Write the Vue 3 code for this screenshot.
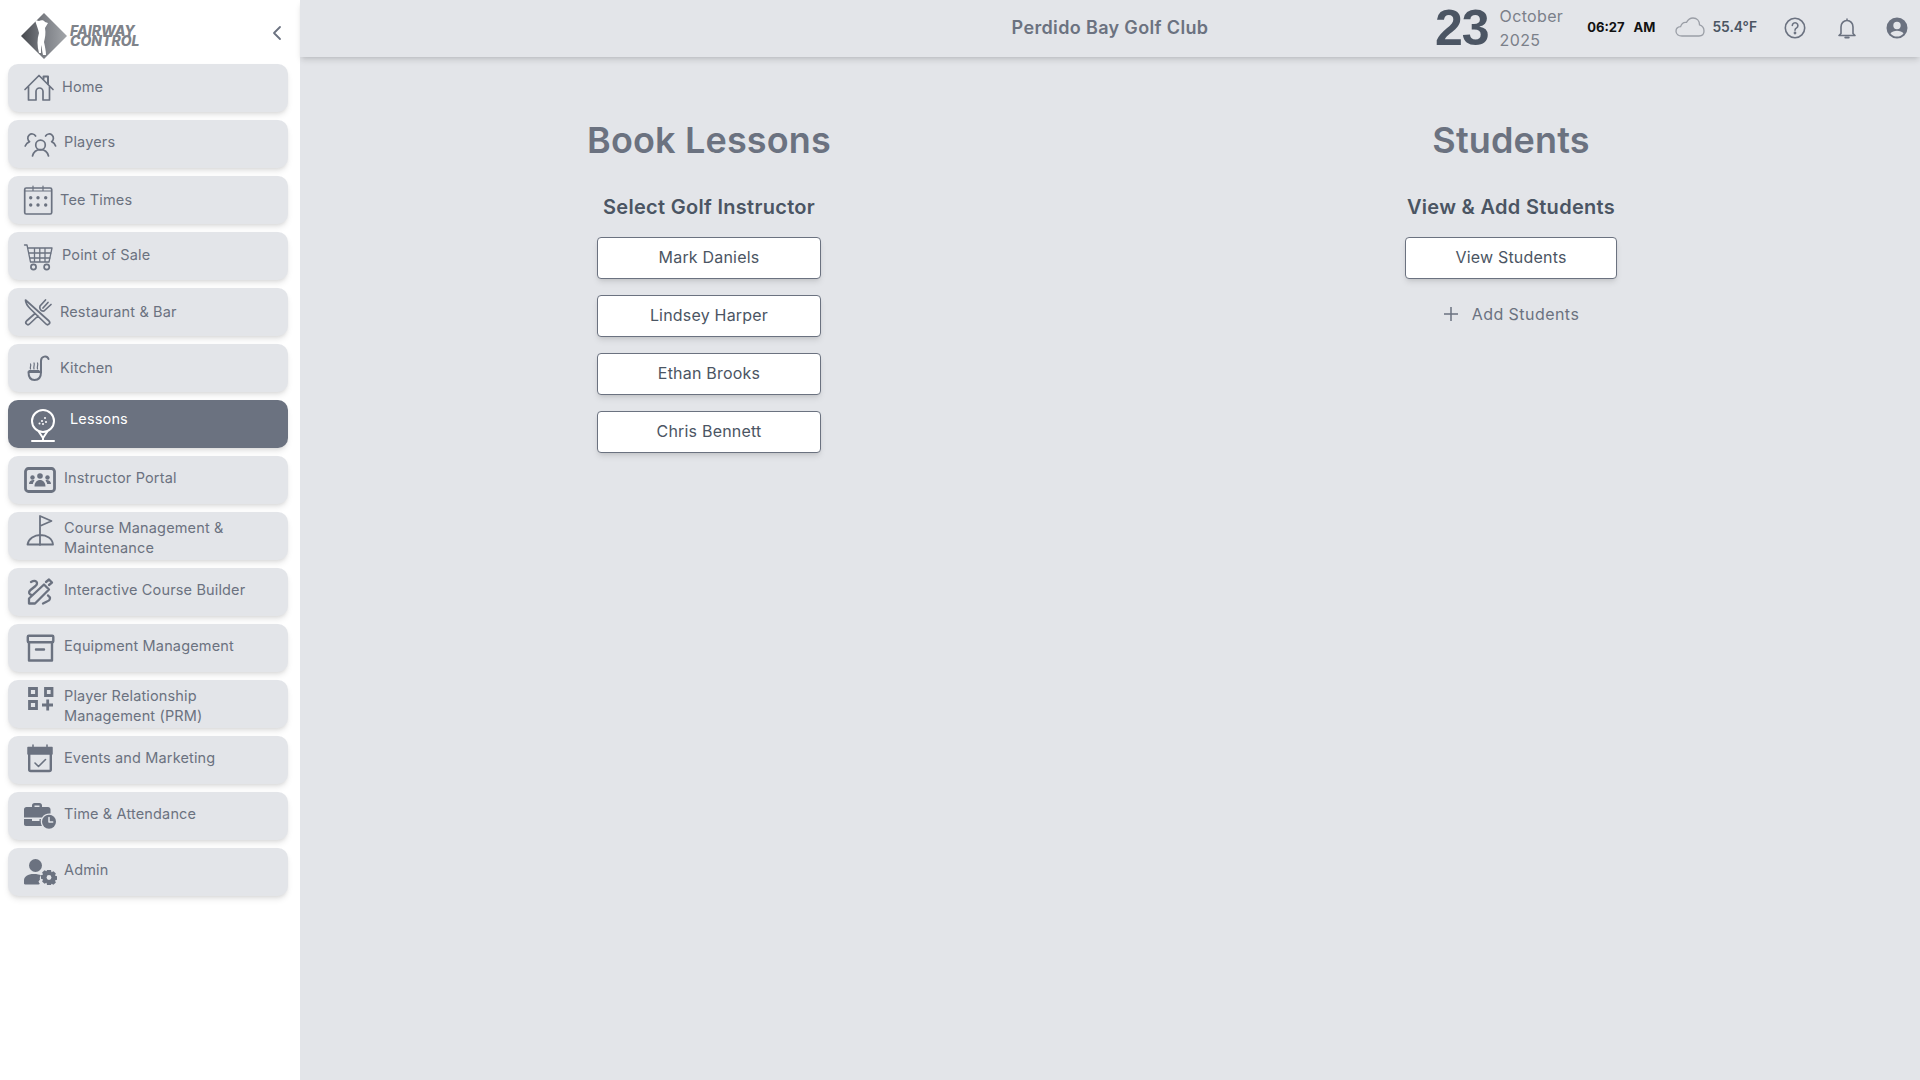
<script setup>
const navItems = [
  { label: 'Home', gap: 6, lift: -1, icon: '<path d="M1 17.500 15 3.500l14 14M4.500 14.500V28H12v-8.500a3.500 3.500 0 0 1 7 0V28h6.500V14.500"/><path d="M19.500 7V4.500H24V12" stroke-width="2"/>' },
  { label: 'Players', gap: 8, lift: -2, icon: '<circle cx="16.500" cy="17" r="4.800"/><path d="M8.500 28c1-4 4-6.400 8-6.400s7 2.400 8 6.400M11.600 8a4.200 4.200 0 1 0-6 5.600c-2 .8-3.600 2.400-4.400 4.400M21.600 8a4.200 4.200 0 1 1 6 5.600c2 .8 3.400 2.400 4 4.400"/>' },
  { label: 'Tee Times', gap: 4, lift: 0, icon: '<rect x=".7" y="4" width="27" height="26" rx="1.500"/><path d="M9 2v5M19 2v5M1 7h26" stroke-width="1.200"/><g fill="currentColor" stroke="none"><circle cx="6.700" cy="13.700" r="1.700"/><circle cx="14" cy="13.700" r="1.700"/><circle cx="21.700" cy="13.700" r="1.700"/><circle cx="6.700" cy="21" r="1.700"/><circle cx="14" cy="21" r="1.700"/><circle cx="21.700" cy="21" r="1.700"/></g>' },
  { label: 'Point of Sale', gap: 6, lift: -1, icon: '<path d="M.5 5H3l3.500 17H25l3-14H4M4.800 13h22.400M5.800 18h20.400M10.500 8v14M15.800 8v14M21 8v14" stroke-width="1.300"/><circle cx="9.500" cy="27" r="2.600"/><circle cx="22.700" cy="27" r="2.600"/>' },
  { label: 'Restaurant & Bar', gap: 4, lift: 0, icon: '<path d="M1.500 4 25 25a2 2 0 0 1-3 3L6.500 13C3.500 10 1.500 7 1.500 4ZM11 17.500 2.500 25a2 2 0 0 0 3 3l8.500-8M21.500 4l-5.500 6c-1 3 1 5.500 4 5l7-6.500M24 6.500l-5 5.500"/>' },
  { label: 'Kitchen', gap: 4, lift: 0, icon: '<path d="M4.500 20H17c0 5-2.500 8-6.500 8s-6-3-6-8ZM17 21V9c0-5 6-6 7.500-2" stroke-width="2"/><path d="M6.500 12c1 1.500-.8 2.500 0 5M10 11c1 2-.8 3 0 6M13.500 11c1 2-.8 3 0 6M5 18.500h10" stroke-width="1.200"/>' },
  { label: 'Lessons', gap: 14, lift: -5, icon: '<circle cx="19" cy="13" r="11" stroke-width="2"/><path d="M15 24l4 6 4-6M19 30v3M8 33h22" stroke-width="2"/><g fill="currentColor" stroke="none"><circle cx="21" cy="10" r="1"/><circle cx="18" cy="13" r="1"/><circle cx="22" cy="14" r="1"/><circle cx="15.500" cy="15.500" r="1"/><circle cx="19" cy="16" r="1"/></g>' },
  { label: 'Instructor Portal', gap: 8, lift: -2, icon: '<rect x="1.500" y="4.500" width="29" height="23" rx="3" stroke-width="2.800"/><g fill="currentColor" stroke="none"><circle cx="16" cy="12" r="2.800"/><circle cx="8.500" cy="13.500" r="2.200"/><circle cx="23.500" cy="13.500" r="2.200"/><path d="M10.500 22.500c0-4 2.500-6.500 5.500-6.500s5.500 2.500 5.500 6.500ZM5 20c0-2.500 2-4 4.500-4 .8 0 1 .5 1 .5-1 1.200-1.500 2.300-1.700 3.500ZM27 20c0-2.500-2-4-4.500-4-.8 0-1 .5-1 .5 1 1.200 1.500 2.300 1.700 3.500Z"/></g>' },
  { label: 'Course Management & Maintenance', gap: 8, lift: 2, icon: '<path d="M3.500 24.500c1-6 7-9.500 13-9.500s12 3.500 12.500 9.500ZM16 25V-4l11.500 5L16 6" stroke-width="1.800"/>' },
  { label: 'Interactive Course Builder', gap: 8, lift: -2, icon: '<path d="M5 27.500V22.500L20 8.500l5 5-14 14ZM7 6c5-3 8 1 4.500 4l-5 4c-2.500 2-1.500 4.500 1 5M24 19.500c3 2 2.500 5-1 6l-4 2M22 6l3-2.500 3 3-3 2.500" stroke-width="2.300"/>' },
  { label: 'Equipment Management', gap: 8, lift: -2, icon: '<rect x="3.800" y="3.800" width="25.500" height="6.500" rx="1" stroke-width="2.400"/><path d="M5 10v18.500h23V10M12 17.500h8" stroke-width="2.400"/>' },
  { label: 'Player Relationship Management (PRM)', gap: 8, lift: 2, icon: '<g stroke-linejoin="miter" stroke-linecap="butt" stroke-width="2.800"><path d="M5.500.5h7v7h-7ZM21.500.5h6.500v7h-6.500ZM5.500 13.500h7v7h-7ZM23.700 11.500v11M18 17h11"/></g>' },
  { label: 'Events and Marketing', gap: 8, lift: -2, icon: '<rect x="5.200" y="5" width="21.600" height="22" rx="1.500" stroke-width="2.400"/><path d="M4 3.500h24v6.500H4ZM9 1v3M23 1v3" fill="currentColor" stroke-width="1.500"/><path d="M11 19l3.500 3.500 7-7" stroke-width="1.600"/>' },
  { label: 'Time & Attendance', gap: 8, lift: -2, icon: '<g fill="currentColor" stroke="none"><path d="M8 7V5.500C8 4 9 3 10.500 3h5C17 3 18 4 18 5.500V7h6c1.500 0 2.500 1 2.500 2.500v4c-3.500-.3-7 1-8.500 4H0V9.500C0 8 1 7 2.500 7Zm2.500 0h5V5.500h-5ZM0 19h8v2h7.500v-2H17c-.5 2.500-.2 5 1 7H2c-1.200 0-2-.8-2-2Z"/><circle cx="25" cy="21.700" r="7"/></g><path d="M25 17.500V22h3.700" stroke="#e4e6ea" stroke-width="1.500"/>' },
  { label: 'Admin', gap: 8, lift: -2, icon: '<g fill="currentColor" stroke="none"><circle cx="11.500" cy="9.500" r="6.500"/><path d="M0 27.500v-3C0 20.500 4 18 9.500 18c4 0 6 .5 7.500 1.500-1 1-1.500 2.500-1 4l-1.500 2c.3 1 .8 1.500 1.300 2.200-.2 .6-.8.800-1.300.8H2c-1.200 0-2-.2-2-1Z"/><path d="M23 14h4l.5 2.200 2-1 2.400 2.400-1 2 2.100.600v3.500l-2.100.700 1 2-2.400 2.400-2-1L27 29h-4l-.5-2.200-2 1-2.400-2.400 1-2-2.100-.700v-3.500l2.100-.600-1-2 2.400-2.400 2 1Z"/></g><circle cx="25" cy="21.500" r="2.400" fill="#e4e6ea" stroke="none"/>' }
]
const instructors = ['Mark Daniels', 'Lindsey Harper', 'Ethan Brooks', 'Chris Bennett']
</script>

<template>
  <div class="app">
    <aside class="sidebar">
      <div class="brand">
        <div class="logo">
          <svg class="logo-mark" width="46" height="46" viewBox="0 0 46 46">
            <defs>
              <linearGradient id="diamond" x1="0" y1="0" x2="1" y2="0">
                <stop offset="0" stop-color="#45484d" />
                <stop offset=".5" stop-color="#7c7f85" />
                <stop offset="1" stop-color="#a3a6aa" />
              </linearGradient>
            </defs>
            <path d="M23 0 46 23 23 46 0 23Z" fill="url(#diamond)" />
            <path d="M14 7 18 8C20 7 23 7 24 9L27 10 24 15C25 20 24 25 23 29 24 34 25 38 25 42L22 42C21 38 21 35 20 32L20 40 18 40C16 33 16 26 18 20 17 15 15 11 14 7Z" fill="#fff" />
          </svg>
          <div class="logo-text"><span>FAIRWAY</span><span>CONTROL</span></div>
        </div>
        <svg class="collapse" width="24" height="24" viewBox="0 0 24 24" fill="none" stroke="currentColor" stroke-width="1.800" stroke-linecap="round" stroke-linejoin="round"><path d="M15 6l-6 6 6 6" /></svg>
      </div>
      <nav class="nav">
        <a v-for="item in navItems" :key="item.label" class="nav-item" :class="{ active: item.label === 'Lessons' }">
          <svg class="nav-icon" width="32" height="32" viewBox="0 0 32 32" fill="none" stroke="currentColor" stroke-width="1.700" stroke-linecap="round" stroke-linejoin="round" v-html="item.icon"></svg>
          <span class="nav-label" :style="{ marginLeft: item.gap + 'px', transform: 'translateY(' + item.lift + 'px)' }">{{ item.label }}</span>
        </a>
      </nav>
    </aside>
    <div class="content">
      <header class="topbar">
        <div class="club">Perdido Bay Golf Club</div>
        <div class="status">
          <div class="date">
            <span class="day">23</span>
            <span class="month-year"><span>October</span><span>2025</span></span>
          </div>
          <div class="time"><span>06:27</span><span>AM</span></div>
          <div class="weather">
            <svg width="30" height="20" viewBox="0 0 30 20" fill="none" stroke="#9a9ea6" stroke-width="1.300"><path d="M7 19C3.500 19 1 17 1 14.200 1 11.500 3 9.800 5.600 9.600 6.500 6.600 9 5 11.500 5.400 13 2.500 15.500 1 18 1c4 0 6.500 3 6.500 6.800C27 8.500 29 11 29 14c0 3-2 5-5 5Z" /></svg>
            <span>55.4°F</span>
          </div>
          <svg class="top-icon help" width="24" height="24" viewBox="0 0 24 24" fill="none" stroke="currentColor" stroke-width="1.600" stroke-linecap="round"><circle cx="12" cy="12" r="9.700" /><path d="M9.300 9.500a2.800 2.800 0 1 1 4.300 2.400c-1 .6-1.600 1.200-1.600 2.400" /><circle cx="12" cy="17" r=".6" fill="currentColor" /></svg>
          <svg class="top-icon bell" width="24" height="24" viewBox="0 0 24 24" fill="none" stroke="currentColor" stroke-width="1.600" stroke-linejoin="round"><path d="M12 2.500v1.300M6 17.500V11c0-3.700 2.500-6.500 6-6.500s6 2.800 6 6.500v6.500l2 2H4Z" /><path d="M10.300 21.500h3.400" stroke-width="2" stroke-linecap="round" /></svg>
          <svg class="top-icon user" width="24" height="24" viewBox="0 0 24 24"><path fill="currentColor" d="M12 1.500a10.500 10.500 0 1 0 0 21 10.500 10.500 0 0 0 0-21Zm0 4.300a3.700 3.700 0 1 1 0 7.400 3.700 3.700 0 0 1 0-7.400Zm0 14.700c-2.700 0-5-1.200-6.500-3.100 1-1.700 4-2.700 6.500-2.700s5.500 1 6.500 2.700c-1.500 1.900-3.800 3.100-6.500 3.100Z" /></svg>
        </div>
      </header>
      <main class="panels">
        <section class="panel">
          <h1>Book Lessons</h1>
          <h2>Select Golf Instructor</h2>
          <div class="btn-stack">
            <button v-for="name in instructors" :key="name" class="btn">{{ name }}</button>
          </div>
        </section>
        <section class="panel">
          <h1>Students</h1>
          <h2>View &amp; Add Students</h2>
          <button class="btn btn-wide">View Students</button>
          <div class="add">
            <svg width="16" height="16" viewBox="0 0 16 16" stroke="currentColor" stroke-width="1.500"><path d="M8 1v14M1 8h14" /></svg>
            <span>Add Students</span>
          </div>
        </section>
      </main>
    </div>
  </div>
</template>

<style>
html, body { margin: 0; height: 100%; overflow: hidden; background: #fff; }
</style>

<style scoped>
.app { display: flex; width: 1920px; height: 1080px; font-family: Inter, "Noto Sans", sans-serif; color: #6b7280; overflow: hidden; }
.sidebar { width: 300px; flex: none; background: #fff; display: flex; flex-direction: column; }
.brand { height: 64px; display: flex; align-items: center; justify-content: space-between; padding: 0 11px 0 21px; box-sizing: border-box; }
.logo { display: flex; align-items: center; gap: 3px; margin-top: 8px; }
.logo-mark { display: block; margin-top: -1px; }
.logo-text { display: flex; flex-direction: column; font-style: italic; font-weight: 800; font-size: 14px; line-height: 10px; color: #7f838a; margin-top: 0; }
.collapse { color: #6b7280; margin-top: 2px; }
.nav { display: flex; flex-direction: column; gap: 8px; padding: 0 12px 0 8px; }
.nav-item { height: 48px; box-sizing: border-box; display: flex; align-items: center; padding-left: 16px; background: #e3e5e9; border-radius: 10px; box-shadow: 0 4px 6px -1px rgba(0,0,0,.1), 0 2px 4px -2px rgba(0,0,0,.1); font-size: 14.500px; line-height: 20px; letter-spacing: .15px; color: #6b7280; }
.nav-item.active { background: #6b7280; color: #fff; }
.nav-icon { flex: none; overflow: visible; }
.nav-label { display: block; max-width: 195px; }
.content { flex: 1; min-width: 0; background: #e3e5e9; display: flex; flex-direction: column; }
.topbar { height: 57px; flex: none; position: relative; display: flex; align-items: center; box-shadow: 0 4px 6px -1px rgba(0,0,0,.13), 0 2px 4px -2px rgba(0,0,0,.08); }
.club { position: absolute; left: 0; width: 1620px; text-align: center; font-size: 18px; letter-spacing: .35px; font-weight: 600; color: #6b7280; margin-top: -2px; }
.status { margin-left: auto; display: flex; align-items: center; padding-right: 11px; margin-top: -2px; }
.date { display: flex; align-items: center; gap: 11px; }
.day { font-family: "Liberation Sans", sans-serif; font-size: 50px; line-height: 52px; font-weight: 700; letter-spacing: -1px; color: #4b5563; }
.month-year { display: flex; flex-direction: column; font-size: 16px; letter-spacing: .35px; line-height: 24px; color: #7b808a; }
.time { display: flex; gap: 9px; margin-left: 24px; font-size: 13px; font-weight: 700; color: #111; margin-top: -1px; }
.weather { display: flex; align-items: center; gap: 7px; margin-left: 20px; font-size: 13.800px; font-weight: 600; color: #4b5563; margin-top: -1px; }
.top-icon { color: #6b7280; }
.help { margin-left: 26px; }
.bell { margin-left: 28px; }
.user { margin-left: 26px; }
.panels { display: grid; grid-template-columns: 802px 802px; padding: 0 8px; }
.panel { display: flex; flex-direction: column; align-items: center; }
h1 { margin: 58px 0 0; font-size: 36px; letter-spacing: .15px; line-height: 50px; font-weight: 600; color: #6b7280; }
h2 { margin: 28px 0 0; font-size: 20px; letter-spacing: .3px; line-height: 28px; font-weight: 600; color: #4b5563; }
.btn-stack { display: flex; flex-direction: column; gap: 16px; margin-top: 16px; }
.btn { width: 224px; height: 42px; box-sizing: border-box; background: #fff; border: 1px solid #6b7280; border-radius: 4px; box-shadow: 0 4px 6px -1px rgba(0,0,0,.1), 0 2px 4px -2px rgba(0,0,0,.1); font: inherit; font-size: 16px; color: #4b5563; padding: 0 0 2px; letter-spacing: .2px; }
.btn-wide { width: 212px; margin-top: 16px; }
.add { display: flex; align-items: center; gap: 13px; margin-top: 23px; font-size: 16px; letter-spacing: .45px; line-height: 24px; color: #6b7280; height: 24px; }
</style>
